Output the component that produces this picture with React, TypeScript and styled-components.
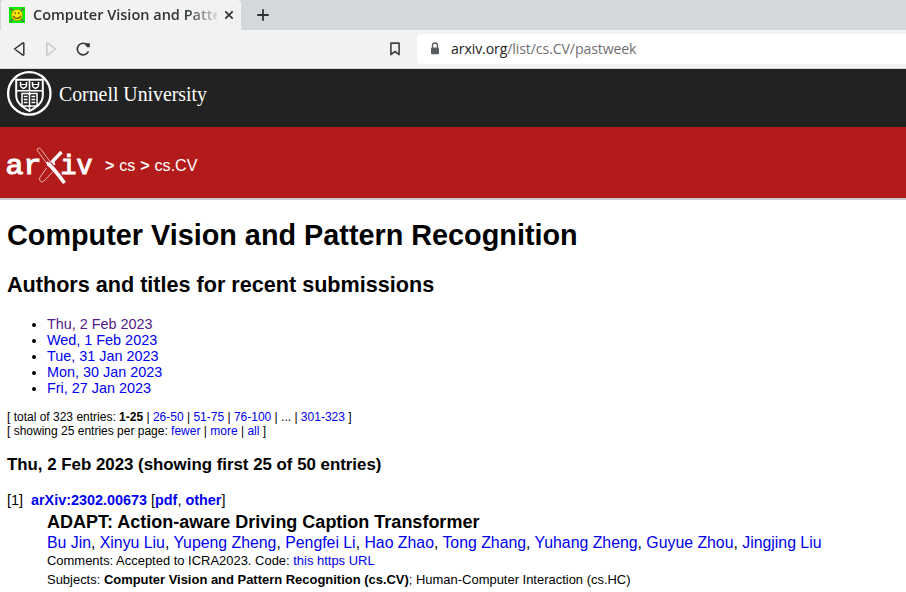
import React from 'react';
import styled, { createGlobalStyle } from 'styled-components';

const GlobalStyle = createGlobalStyle`
  * { box-sizing: border-box; }
  html, body { margin: 0; height: 100%; overflow: hidden; background: #fff; }
  body { font-family: "Liberation Sans", Arial, sans-serif; color: #000; }
  a { color: #0000ee; text-decoration: none; }
  svg { display: block; flex: none; }
`;

const Page = styled.div`
  width: 100%;
  height: 592px;
  overflow: hidden;
`;

const TabBar = styled.div`
  display: flex;
  height: 30px;
  padding-left: 1px;
  background: #d4d8db;
`;

const Tab = styled.div`
  display: flex;
  align-items: center;
  width: 240px;
  height: 30px;
  padding-left: 8px;
  background: #f2f2f2;
  border-radius: 4px 4px 0 0;
`;

const TabTitle = styled.div`
  width: 184px;
  margin-left: 8px;
  overflow: hidden;
  white-space: nowrap;
  font: 600 14.5px/22px "Open Sans", "Noto Sans", sans-serif;
  padding-bottom: 1px;
  color: #2e3436;
  mask-image: linear-gradient(to right, #000 152px, transparent 190px);
`;

const CloseIcon = styled.svg`
  margin-left: 6px;
`;

const NewTabIcon = styled.svg`
  margin: 9px 0 0 16px;
`;

const Toolbar = styled.div`
  display: flex;
  align-items: center;
  height: 39px;
  padding-left: 12px;
  background: #f2f2f2;
  border-bottom: 1px solid #d4d4d4;
`;

const NavIcons = styled.div`
  display: flex;
  gap: 16px;
  width: 376px;
`;

const AddressBar = styled.div`
  display: flex;
  align-items: center;
  flex: 1;
  height: 30px;
  margin-left: 13px;
  padding-left: 13px;
  background: #fff;
  border-radius: 4px 0 0 4px;
`;

const Url = styled.div`
  margin-left: 11px;
  white-space: nowrap;
  font: 14.1px/22px "Open Sans", "Noto Sans", sans-serif;
  letter-spacing: -0.1px;
  color: #707070;
`;

const Host = styled.span`
  color: #222;
`;

const UniversityBar = styled.div`
  height: 58px;
  padding: 1px 0 0 6px;
  background: #222;
`;

const ArchiveBar = styled.div`
  display: flex;
  height: 73px;
  padding: 18px 0 0 5px;
  background: #b31b1b;
  border-bottom: 2px solid #ccc;
`;

const Breadcrumb = styled.div`
  margin: 10px 0 0 10px;
  font-size: 16.1px;
  word-spacing: 0.4px;
  line-height: 20px;
  color: #fff;
  a { color: #fff; }
`;

const Content = styled.main`
  padding: 0 7px;
  white-space: nowrap;
`;

const PageTitle = styled.h1`
  margin: 18px 0 0;
  font-size: 28.8px;
  line-height: 34px;
`;

const SectionTitle = styled.h2`
  margin: 20px 0 0;
  font-size: 21.6px;
  line-height: 26px;
`;

const DateList = styled.ul`
  margin: 18px 0 0;
  padding-left: 40px;
  font-size: 14.4px;
  line-height: 16px;
`;

const DateLink = styled.a<{ $visited?: boolean }>`
  && { color: ${p => (p.$visited ? '#551a8b' : '#0000ee')}; }
`;

const Paging = styled.div`
  margin-top: 14px;
  font-size: 12px;
  line-height: 14px;
`;

const DayTitle = styled.h3`
  margin: 17px 0 0;
  font-size: 16.85px;
  line-height: 20px;
`;

const EntryHead = styled.div`
  margin-top: 16px;
  font-size: 14.4px;
  line-height: 18px;
`;

const EntryBody = styled.div`
  padding-left: 40px;
`;

const EntryTitle = styled.div`
  margin-top: 3px;
  font-size: 18px;
  font-weight: bold;
  line-height: 20px;
`;

const Authors = styled.div`
  margin-top: 1px;
  font-size: 15.84px;
  line-height: 18px;
  height: 18px;
  padding-top: 1px;
`;

const Meta = styled.div`
  font-size: 12.96px;
  line-height: 19px;
`;

const Favicon = () => (
  <svg width="16" height="16" viewBox="0 0 16 16">
    <rect width="16" height="16" fill="#00f400" />
    <path d="M1.500 1.500 14.500 14.500M14.500 1.500 1.500 14.500M1 3l2-2M13 1l2 2M1 13l2 2M13 15l2-2" fill="none" stroke="#6b6f4a" strokeWidth="1.200" />
    <circle cx="8" cy="8" r="5.500" fill="#ffe900" stroke="#b58a00" strokeWidth=".7" />
    <path d="M6.200 5v2.200M9.800 5v2.200M4.300 8.800c1.200 3.400 6.200 3.400 7.400 0" fill="none" stroke="#6b4a00" strokeWidth="1.100" />
  </svg>
);

const CornellLogo = () => (
  <svg width="206" height="50" viewBox="0 0 206 50" fill="none" stroke="#fff">
    <circle cx="23.300" cy="23.400" r="21.200" strokeWidth="2.300" />
    <path d="M10.200 9.800h26.600v15.500c0 8-6.500 12.100-13.300 15.800-6.800-3.700-13.300-7.800-13.300-15.800z" strokeWidth="2" />
    <path d="M10.500 20.700h26M23.500 10v10.500" strokeWidth="1.600" />
    <path d="M14.500 12v3.500c0 1.500 1.500 2.300 3 3 1.500-.7 3-1.500 3-3V12M26.500 12v3.500c0 1.500 1.500 2.300 3 3 1.500-.7 3-1.500 3-3V12" strokeWidth="1.500" />
    <path d="M14.500 14.500h6M26.500 14.500h6" strokeWidth="1.200" />
    <path d="M16 23.500h6l1.500 1 1.500-1h6v12.500h-6l-1.500 1-1.500-1h-6zM23.500 22v18" strokeWidth="1.500" />
    <path d="M17.800 26.500h3.700M17.800 29.500h3.700M17.800 32.500h3.700M25.500 26.500h3.700M25.500 29.500h3.700M25.500 32.500h3.700" strokeWidth="1.500" />
    <text x="53" y="30.500" fill="#fff" stroke="none" fontFamily="'Liberation Serif', serif" fontSize="21" textLength="148" lengthAdjust="spacingAndGlyphs">Cornell University</text>
  </svg>
);

const ArxivLogo = () => (
  <svg width="90" height="42" viewBox="0 0 90 42" fill="none" stroke="#fff">
    <g fill="#fff" strokeWidth="1.100" fontFamily="'Liberation Mono', monospace" fontSize="28">
      <text x="0.500" y="28.500" textLength="36" lengthAdjust="spacingAndGlyphs">ar</text>
      <text x="55.500" y="28.500" textLength="32" lengthAdjust="spacingAndGlyphs">iv</text>
    </g>
    <path d="M46 18 36.500 5Q33 1 32 5L44 21.500M41.500 23 34.500 33Q35 39 39 36L50 24.500" strokeWidth=".9" stroke="#eec0c0" />
    <path d="M56.500 7 46.500 17.500" strokeWidth="3.300" />
    <path d="M43 18.500Q48.500 23 59.500 38" strokeWidth="3.600" />
    <path d="M42 17 44 21M48 16l1.500 4" strokeWidth="2" />
  </svg>
);

const dates = ['Thu, 2 Feb 2023', 'Wed, 1 Feb 2023', 'Tue, 31 Jan 2023', 'Mon, 30 Jan 2023', 'Fri, 27 Jan 2023'];
const authors = ['Bu Jin', 'Xinyu Liu', 'Yupeng Zheng', 'Pengfei Li', 'Hao Zhao', 'Tong Zhang', 'Yuhang Zheng', 'Guyue Zhou', 'Jingjing Liu'];

export default function App() {
  return (
    <Page>
      <GlobalStyle />
      <TabBar>
        <Tab>
          <Favicon />
          <TabTitle>Computer Vision and Patte</TabTitle>
          <CloseIcon width="12" height="12" viewBox="0 0 12 12" fill="none" stroke="#2e3436" strokeWidth="1.700">
            <path d="m2.300 2.300 7.400 7.400m0-7.400-7.400 7.400" />
          </CloseIcon>
        </Tab>
        <NewTabIcon width="12" height="12" viewBox="0 0 12 12" fill="none" stroke="#2e3436" strokeWidth="1.800">
          <path d="M6 .2v11.600M.2 6h11.600" />
        </NewTabIcon>
      </TabBar>
      <Toolbar>
        <NavIcons>
          <svg width="16" height="16" viewBox="0 0 16 16" fill="none" stroke="#333739" strokeWidth="1.500" strokeLinejoin="round">
            <path d="M11.800 2.200v11.600q-.6.600-1.300 0L2.500 8l8-5.800q.7-.6 1.300 0z" />
          </svg>
          <svg width="16" height="16" viewBox="0 0 16 16" fill="none" stroke="#c4c4c4" strokeWidth="1.400" strokeLinejoin="round">
            <path d="M2.800 2.200v11.600q.6.600 1.300 0L11.500 8 4.100 2.200q-.7-.6-1.300 0z" />
          </svg>
          <svg width="16" height="16" viewBox="0 0 16 16" fill="none" stroke="#333739" strokeWidth="1.600">
            <path d="M12.500 10.200A5.800 5.800 0 1 1 11.300 4" />
            <path d="M9.700 2.200h4.100v4.100h-2.500L9.700 4.500z" fill="#333739" stroke="none" />
          </svg>
        </NavIcons>
        <svg width="16" height="16" viewBox="0 0 16 16" fill="none" stroke="#444749" strokeWidth="1.700" strokeLinejoin="round">
          <path d="M2.900 2.200h8.200v11.400L7 10.500l-4.100 3.100z" />
        </svg>
        <AddressBar>
          <svg width="10" height="14" viewBox="0 0 10 14">
            <path d="M2.500 6V3.500a2.500 2.500 0 0 1 5 0V6" fill="none" stroke="#5a5d60" strokeWidth="1.300" />
            <rect x="1" y="5.500" width="8" height="6.800" rx="1" fill="#5a5d60" />
          </svg>
          <Url><Host>arxiv.org</Host>/list/cs.CV/pastweek</Url>
        </AddressBar>
      </Toolbar>
      <UniversityBar><CornellLogo /></UniversityBar>
      <ArchiveBar>
        <ArxivLogo />
        <Breadcrumb><b>&gt;</b> <a>cs</a> <b>&gt;</b> <a>cs.CV</a></Breadcrumb>
      </ArchiveBar>
      <Content>
        <PageTitle>Computer Vision and Pattern Recognition</PageTitle>
        <SectionTitle>Authors and titles for recent submissions</SectionTitle>
        <DateList>
          {dates.map((d, i) => <li key={d}><DateLink $visited={i === 0}>{d}</DateLink></li>)}
        </DateList>
        <Paging>
          <div>[ total of 323 entries: <b>1-25</b> | <a>26-50</a> | <a>51-75</a> | <a>76-100</a> | ... | <a>301-323</a> ]</div>
          <div>[ showing 25 entries per page: <a>fewer</a> | <a>more</a> | <a>all</a> ]</div>
        </Paging>
        <DayTitle>Thu, 2 Feb 2023 (showing first 25 of 50 entries)</DayTitle>
        <EntryHead>[1]&nbsp; <b><a>arXiv:2302.00673</a></b> [<b><a>pdf</a></b>, <b><a>other</a></b>]</EntryHead>
        <EntryBody>
          <EntryTitle>ADAPT: Action-aware Driving Caption Transformer</EntryTitle>
          <Authors>
            {authors.map((a, i) => <React.Fragment key={a}>{i > 0 && ', '}<a>{a}</a></React.Fragment>)}
          </Authors>
          <Meta>Comments: Accepted to ICRA2023. Code: <a>this https URL</a></Meta>
          <Meta>Subjects: <b>Computer Vision and Pattern Recognition (cs.CV)</b>; Human-Computer Interaction (cs.HC)</Meta>
        </EntryBody>
      </Content>
    </Page>
  );
}
